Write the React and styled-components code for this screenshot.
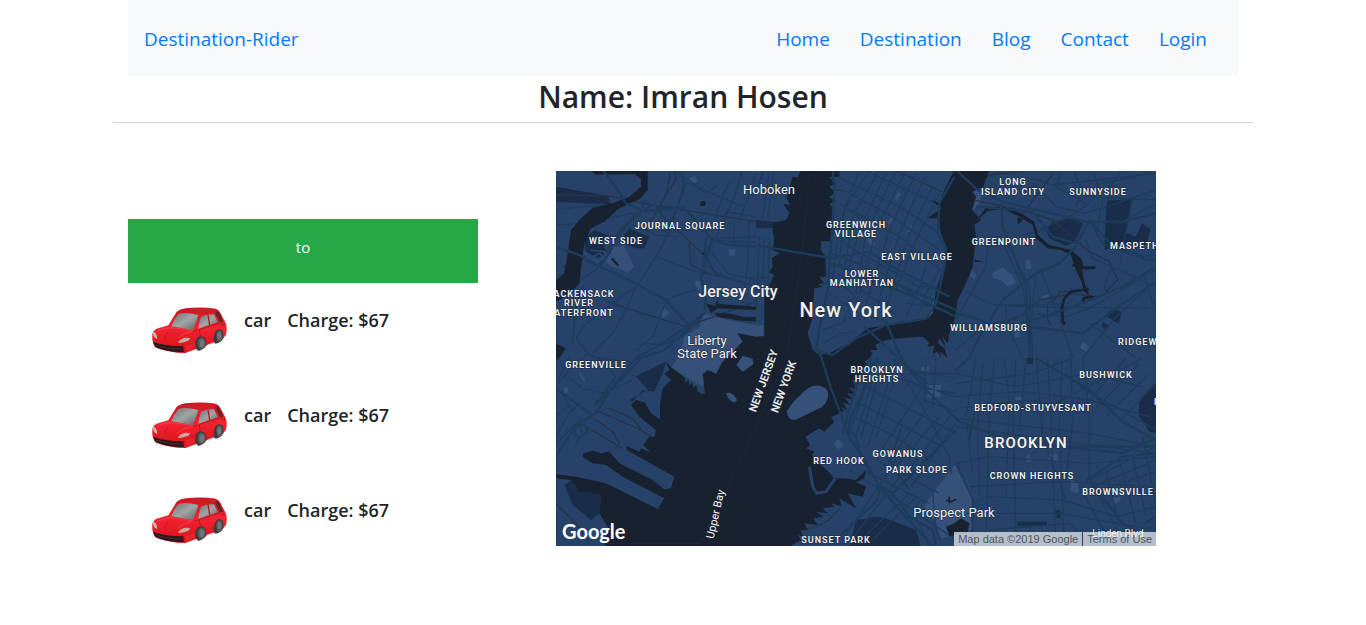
import React from "react";
import styled, { createGlobalStyle } from "styled-components";

const GlobalStyle = createGlobalStyle`
  *, *::before, *::after { box-sizing: border-box; }
  body {
    margin: 0;
    background: #fff;
    color: #212529;
    font-family: "Open Sans", "Noto Sans", sans-serif;
    font-size: 16px;
    line-height: 24px;
  }
`;

const Page = styled.div`
  width: 100%;
  max-width: 1140px;
  margin: 0 auto;
`;

const Navbar = styled.header`
  display: flex;
  align-items: center;
  justify-content: space-between;
  margin: 0 15px;
  padding: 25px 16px 23px;
  min-height: 76px;
  background: #f8f9fa;
`;

const NavLinks = styled.nav`
  display: flex;
  gap: 30px;
  padding-right: 15px;
`;

const NavLink = styled.a`
  color: #007bff;
  font-size: 19px;
  line-height: 28px;
  text-decoration: none;
`;

const Title = styled.h1`
  margin: 0;
  padding: 2px 0 6px;
  border-bottom: 1px solid #d2d2d2;
  font-size: 30px;
  font-weight: 600;
  line-height: 38px;
  text-align: center;
`;

const Content = styled.main`
  display: flex;
  align-items: flex-start;
  padding: 48px 15px;
  gap: 78px;
`;

const Rides = styled.section`
  flex: 0 0 350px;
  padding-top: 48px;
`;

const Route = styled.p`
  margin: 0;
  padding: 16px 16px 24px;
  background: #28a745;
  color: #fff;
  font-size: 15px;
  text-align: center;
`;

const RideList = styled.ul`
  margin: 0;
  padding: 0;
  list-style: none;
`;

const Ride = styled.li`
  display: flex;
  align-items: flex-start;
  gap: 16px;
  height: 95px;
  padding: 22px 20px;
`;

const RideText = styled.span`
  padding-top: 3px;
  font-size: 18px;
  font-weight: 600;
`;

const CarSvg = styled.svg`
  display: block;
  width: 80px;
  height: 50px;
`;

const MapFrame = styled.section`
  position: relative;
  flex: 0 1 600px;
`;

const MapSvg = styled.svg`
  display: block;
  width: 100%;
  height: auto;
  font-family: Roboto, sans-serif;
`;

const Attribution = styled.div`
  position: absolute;
  right: 0;
  bottom: 0;
  display: flex;
  height: 14px;
  color: #4c5561;
  font-family: "Liberation Sans", sans-serif;
  font-size: 11px;
  line-height: 14px;
  white-space: nowrap;
`;

const Credit = styled.span`
  padding: 0 4px;
  background: rgba(245, 245, 245, 0.7);
  & + & { margin-left: 1px; }
  a { color: inherit; text-decoration: none; }
`;

const AreaLabel = styled.text`
  fill: #f3f1ec;
  font-size: ${(p) => p.$size || 9}px;
  font-weight: ${(p) => p.$weight || 600};
  letter-spacing: ${(p) => (p.$tracked === false ? 0 : 1)}px;
  text-anchor: ${(p) => p.$anchor || "middle"};
  paint-order: stroke;
  stroke: #1c2a40;
  stroke-width: 1px;
`;

const LogoText = styled.text`
  fill: #fff;
  font-family: Lato, sans-serif;
  font-size: 20px;
  font-weight: 700;
`;

function Car() {
  return (
    <CarSvg viewBox="27 30 240 150" role="img" aria-label="Red car">
      <defs>
        <linearGradient id="paint" x1="0" y1="0" x2="0" y2="1">
          <stop offset="0" stopColor="#c9161e" />
          <stop offset=".45" stopColor="#f02531" />
          <stop offset="1" stopColor="#d80e19" />
        </linearGradient>
        <linearGradient id="glass" x1="0" y1="0" x2="1" y2="1">
          <stop offset="0" stopColor="#6e7072" />
          <stop offset=".5" stopColor="#a2a5a6" />
          <stop offset="1" stopColor="#606365" />
        </linearGradient>
      </defs>
      <path d="M40 116Q44 103 60 99L88 91L112 52Q119 43 140 40Q188 34 228 41Q238 43 243 52L260 84Q266 98 261 119L252 131L202 151L139 174Q90 173 51 158Q38 148 40 116Z" fill="url(#paint)" />
      <path d="M112 52Q155 38 228 41L240 47Q210 44 179 57L121 54Z" fill="#cf1d27" />
      <path d="M119 56Q144 51 178 60Q171 85 161 105Q128 99 97 94Q104 73 119 56Z" fill="url(#glass)" />
      <path d="M186 65Q205 56 225 58L236 82L178 101Q180 82 186 65Z" fill="url(#glass)" />
      <path d="M207 59L212 90" stroke="#a61a20" strokeWidth="4" />
      <path d="M228 51L238 49Q248 64 252 82L241 80Z" fill="#62272b" />
      <path d="M178 105L242 83Q252 94 258 88M175 105L164 110M181 105L184 123" fill="none" stroke="#a40d15" strokeWidth="2" />
      <path d="M55 110Q80 94 113 100Q145 102 161 109Q133 114 115 130" fill="none" stroke="#f53c45" strokeWidth="3" />
      <path d="M87 111Q76 122 78 134" fill="none" stroke="#ba101a" strokeWidth="2" />
      <path d="M41 112Q48 108 53 121L55 132Q43 129 41 112Z" fill="#c9b8af" />
      <path d="M118 140Q132 124 154 130Q147 143 118 144Z" fill="#cbaaa2" />
      <path d="M43 140Q72 153 133 154L134 171Q80 171 49 155Z" fill="#24191b" />
      <path d="M51 151Q91 164 130 162" fill="none" stroke="#5d3538" strokeWidth="2" />
      <path d="M139 151L167 145L167 160L141 172Z" fill="#e4232d" />
      <path d="M170 160Q164 128 184 124Q204 124 202 151Q196 164 178 168Z" fill="#3d3e40" />
      <ellipse cx="188" cy="145" rx="11" ry="17" fill="#5d5f61" />
      <ellipse cx="189" cy="145" rx="6" ry="11" fill="#747678" />
      <path d="M224 142Q221 108 240 102Q257 103 252 131Q246 143 230 146Z" fill="#3b3c3e" />
      <ellipse cx="241" cy="123" rx="9" ry="17" fill="#5b5d5f" />
      <ellipse cx="241" cy="122" rx="5" ry="10" fill="#737577" />
    </CarSvg>
  );
}

const parks = [
  "M165 230L205 228L215 250L235 290L215 308L195 297L165 290L150 275Z",
  "M440 425L475 440L540 455L600 465L622 465V500L600 500L545 490L560 515L500 575L480 612L462 600L440 650L390 622L345 592L370 560L385 500L430 470Z",
  "M400 25L418 18L425 35L410 42ZM518 238H537V257H518ZM325 415L343 430L320 445L313 435ZM415 335L432 330L438 370L420 350Z",
  "M1025 66L1036 70L1023 92L1016 86ZM1005 140L1014 145L1000 164L993 158ZM1065 165L1073 168L1060 188L1053 185ZM930 202L952 210L958 224L942 225Z",
  "M1308 310L1340 292L1368 315L1380 340L1355 350L1335 330L1310 325ZM1408 270L1422 268L1426 296L1410 298ZM1458 378L1478 372L1480 387L1462 390ZM1246 302L1262 313L1255 330L1242 320Z",
  "M1256 20L1280 30L1270 60L1280 70L1265 110L1248 123L1248 80Z",
  "M1580 515L1600 530L1590 545L1573 532ZM1376 482H1390V501H1376Z",
  "M1120 645H1154V682H1114ZM1095 590H1120V603H1095ZM845 807L864 823L849 838L833 824Z",
  "M1200 879L1240 950L1253 980L1245 1040L1250 1080L1190 1095L1155 1105L1140 1060L1105 1010L1130 970Z",
  "M1376 680H1400V696H1380ZM1405 866L1418 852L1430 873L1415 877ZM1478 852H1505V872H1478ZM1545 930L1570 937L1565 970L1545 964ZM1670 985L1695 980L1690 995L1670 1004Z",
  "M70 605L90 632L84 635L68 611ZM22 656L34 650L38 666L27 670Z",
  "M1165 290L1175 260L1165 330L1150 400L1125 440L1110 445L1135 390Z",
];

const darkAreas = [
  "M115 180L160 198L138 213L150 245L130 265L90 245L82 210Z",
  "M220 175L280 200L265 235L238 235L190 215Z",
  "M600 150L678 158L678 174L600 175ZM0 50L155 77L165 103L0 96Z",
  "M1490 155L1540 143L1582 160L1555 215L1530 227L1480 205L1470 180Z",
  "M1655 92L1726 87L1713 165L1700 225L1645 240L1650 115Z",
  "M1705 186L1740 200L1758 160L1784 178L1770 225L1730 238L1700 220Z",
  "M1657 425L1675 415L1697 426L1689 462L1653 440ZM1640 455L1660 468L1650 480L1637 470Z",
  "M1790 645L1803 640V790L1780 785L1765 760L1748 738L1750 690Z",
  "M220 690L275 660L240 618L330 575L320 610L295 665L260 660L230 695Z",
  "M45 930L70 965L135 975L130 1030L105 1050L50 1005L25 945Z",
  "M900 1050L960 1040L990 1045L1080 1080L1095 1130H880Z",
  "M1385 1055H1473V1067H1385ZM1498 1020H1513V1045H1503ZM1412 564H1432V581H1412Z",
];

const water = [
  "M100 0H275V60L250 88L190 115L145 155L105 175L85 220L76 290L70 340L45 370L0 395V330L25 310L36 245L45 180L75 145L110 113L170 100L220 80L255 50V27L235 12L120 14Z",
  "M0 520L28 535L15 558L0 574Z",
  "M735 0L725 22L710 20L700 55L685 53L698 68L690 83L703 105L682 101L700 130L690 150L650 158V182L655 205L650 240L672 250L648 263L650 290L638 307L655 315L640 345L650 372L625 378V498L600 500L545 490L560 515L500 575L480 612L455 600L440 612L445 655L447 670L437 672L425 664L420 645L413 655L407 637L400 647L397 630L388 638L385 622L345 592L330 575L340 600L325 612L345 630L320 655L312 700L312 748L300 740L285 730L265 697L240 690L225 705L250 740L300 780L295 800L280 800L262 825L285 848L255 835L250 845L212 828V840L355 920L345 955L325 958L290 930L230 900L190 880L160 845L135 850L110 842L82 850L80 860L110 880L150 885L200 920L325 985L305 1018L240 985L150 940L60 920L0 912V925L45 930L70 965L135 975L130 1030L155 1070L145 1130H700L735 1110L725 1095L742 1100L732 1080L755 1080L745 1060L785 1065L772 1045L802 1040L780 1025L815 1030L800 1015L835 1010L825 1000L857 1008L850 985L900 1015L875 970L920 980L930 950L900 937L925 925L930 900L900 930L865 925L835 925L815 902L795 885L768 855L775 845L750 835L762 825L748 800L790 775L805 785L835 755L825 742L850 730L865 722L853 710L875 720L860 698L883 705L865 682L892 690L872 668L900 674L878 650L905 660L888 630L920 638L900 615L935 622L910 590L948 600L925 575L940 564L950 550L942 540L965 540L958 525L990 510L1030 505L1100 500L1120 518L1113 530L1135 527L1130 552L1145 545L1155 567L1152 545L1174 563L1165 535L1145 520L1150 505L1168 530L1160 500L1175 520L1180 490L1195 450L1205 390L1225 350L1250 290L1260 200L1255 165L1275 150L1248 120L1260 80L1250 65L1282 50L1300 0H1195L1165 60L1150 100L1125 90L1155 115L1115 145L1150 145L1152 180L1170 230L1165 290L1140 360L1130 430L1115 445L1080 455L1000 465L935 475L880 520L820 550L790 555L770 540L755 490L770 440L775 355L800 350L785 343L805 340L790 320H810L808 260L795 240V214H825L828 180L812 170L835 150L832 115L820 103L840 92L818 80L840 70L820 50L840 40L818 22L850 20V0Z",
  "M450 400L478 408L483 388L489 402L600 410V420L485 415L465 430ZM475 428L530 432L560 440L600 441V454L555 452L485 440Z",
  "M433 97Q445 88 451 100L445 108L433 108Z",
  "M1260 155L1290 112L1340 110L1395 130L1435 155L1446 195L1480 225L1545 240L1575 265L1582 288L1618 292L1578 296L1586 340L1600 376L1584 365L1577 335L1560 300L1545 255L1515 240L1475 235L1440 205L1430 165L1387 138L1340 117L1295 122Z",
  "M1384 142L1402 148L1385 165ZM1255 268L1285 277L1257 275Z",
  "M1170 1070L1195 1060L1215 1045L1240 1060L1235 1090L1180 1098Z",
];

const tracks = [
  "M0 75L160 78L260 100L600 155M345 0L330 75L270 180M355 0L360 30L325 80M400 220L405 285L465 315M300 110L325 145L450 260L480 315L520 325M155 395L260 430L390 470L600 395M20 285L40 300M0 230L110 280",
  "M1015 0L1160 66M1205 80L1395 120L1490 150L1600 245L1660 275L1685 330L1650 365M1265 480L1330 465L1390 440L1450 390L1550 370L1610 380M1540 365L1510 365L1500 385L1475 400V450L1485 465M1240 810L1255 730",
  "M1200 5L1265 30L1315 12L1400 5M1395 140L1450 65L1500 0",
  "M0 1000L60 1060L100 1115M90 770L200 835M115 720L245 775L285 800M120 750L170 785L190 820L180 835M160 715L230 745L265 790",
  "M720 1085L780 1070L820 1050L855 1010M1010 850L1035 775M1000 870L1060 960",
  "M1765 1060L1800 1040M1760 800L1780 900",
];

const minorRoads = [
  "M0 120L75 110L160 105M0 165L80 160L230 130L350 108M55 340L120 300L190 180L240 140L300 95M50 520L60 400L85 340M60 505L100 555L130 567M60 505L80 470L170 400L245 345L300 260L350 170M100 560L170 490L210 420L240 350M240 540L290 500L330 395L350 380L420 360M245 540L265 520L320 525L380 500M300 260L405 300L520 325L600 350M330 388L400 465M455 230L515 310L600 330M375 30L500 85L560 110M360 0L390 25L450 70L485 45M380 55L350 160L330 190M360 200L300 195L225 160M520 325L470 300L450 285M535 160V225M580 150L575 280L560 400M500 155L510 125L600 140M525 30L500 75L465 185M560 0L535 80L480 205M600 10L580 75L545 165M485 205L600 200M470 210L600 218",
  "M600 60L625 0M640 0L620 145M650 70L690 50M600 50L700 63M655 0L635 140M625 205L620 330M640 205L635 420M600 320L650 325M610 200L600 420",
  "M835 60L860 60L990 128L1150 240M855 25L1040 115L1150 190M850 100L1030 200L1170 315M925 0L1150 105M825 180L880 230L1090 350L1140 350M825 250L980 310L1120 410M820 370L910 430L990 455M845 335L890 370L930 450M855 315L1020 435M910 0L850 160L830 330M940 0L865 120L850 290M970 0L890 140L860 335M995 0L910 180L880 290M1020 0L930 190L900 370M1050 0L960 180L910 370M1080 10L1000 180L925 420M1105 25L1030 190L955 440M1130 50L1060 190L980 450M1150 70L1080 210L1020 360M875 115L910 145L930 200M820 440L900 380M800 480L860 460L870 440M805 520L850 490L900 485M1110 290L1080 380L1050 440M1145 310L1110 370L1090 430M1050 400L1130 410",
  "M1200 450L1250 360L1290 290L1295 210M1230 365L1310 405L1440 405L1540 400M1350 405V460L1400 564M1330 195L1360 260L1400 350L1430 564M1345 205L1385 280L1420 350L1430 564M1440 310L1430 400L1420 564M1455 300L1500 420L1550 560M1200 540L1280 470L1420 430L1530 440L1600 415L1800 300M1310 405L1420 410L1780 415M1600 460L1740 564M1770 360L1680 440L1580 564M1765 320L1800 430M1590 210L1610 265L1690 300L1800 350M1670 285L1645 350L1650 370M1690 295L1705 210L1730 90M1600 150L1640 220L1740 260L1800 255M1600 160L1700 155L1800 100M1450 180L1560 130L1670 40L1700 0M1430 40L1500 110L1590 130L1800 60M1520 0L1500 50L1590 100M1550 0L1580 60L1560 110M1610 0L1640 90L1620 200M1590 80L1800 90M1640 40L1740 20L1790 0M1470 180L1400 195M1430 25L1490 45L1800 10",
  "M0 650L40 600L80 564M40 564L0 640M130 564L180 620L120 700M125 564L220 575M35 620L80 655L145 670L230 630M0 820L80 740M0 800L40 730L70 700M70 765L80 790L55 830M20 670L45 720M0 735L45 705",
  "M880 790L940 620L945 564M900 800L965 570M915 800L980 580M935 830L1020 564M960 805L1035 564M980 835L1100 650M1000 870L1120 710M1020 890L1150 740M1045 920L1180 740M1065 950L1200 760M890 740L1000 790L1140 880M910 700L1160 830M930 650L1200 790M985 610L1195 680M1000 590L1200 625M1010 564L1120 745L1180 860L1185 910M1105 700L1110 564M1130 720L1140 564M1060 610L1200 610M1080 650L1200 670M1100 690L1200 725M880 900L1040 1000L1200 1110M920 900L1120 1000M960 870L1150 970M860 1110L1020 870M885 1110L1040 910M915 1110L1060 970M950 1110L1080 980M1130 970L1140 1080L1160 1130M1080 1040L1120 1130",
  "M1200 610L1380 650L1600 610L1760 650M1200 640L1430 610L1550 564M1200 680L1400 665L1600 690L1780 740M1200 715L1420 690L1600 730M1200 745L1600 790L1800 830M1200 770L1450 805L1800 850M1260 564L1230 740L1250 910M1280 580L1265 760L1270 980M1315 564L1300 740L1290 1120M1345 564L1360 700L1350 980M1380 564L1370 720L1380 1100M1410 564L1390 780M1440 564L1460 800L1530 990M1475 564L1485 760L1500 1128M1520 564L1510 760L1525 1130M1545 564L1550 750L1530 930M1580 564L1600 730L1600 930M1480 710L1760 564M1570 650L1800 780M1600 690L1710 564M1620 715L1750 580M1650 740L1780 610M1690 755L1800 640M1600 930L1800 830M1610 950L1800 870M1600 970L1800 905M1560 930L1670 1130M1600 925L1710 1130M1650 900L1690 1070M1690 870L1740 1060M1730 860L1770 1040M1770 840L1800 1020M1250 1000L1300 980L1520 990L1680 1040L1800 1010M1230 1030L1510 1030L1800 1080M1300 1080L1540 1060L1610 1128M1200 880L1300 860L1600 880L1800 860M1240 950L1520 935L1800 950",
];

const majorRoads = [
  "M0 230L70 255L130 290L210 325L325 388L400 465M140 0L185 60L210 100L265 125L380 112L410 140L465 205L515 225L600 230M375 0L385 50L360 125L325 185M600 225L710 245L830 265M130 290L160 250L185 200L240 130M470 205L435 320L450 390L445 430L400 465L320 520L240 564L170 650L120 730L60 765L0 860M450 200L440 320M440 440L325 540L255 564L180 645L115 705M0 655L60 700L110 735M60 765H85L95 785L70 805L55 790Z",
  "M830 0L835 60L828 180L815 360L795 450L780 540L830 555L900 505L990 465L1110 445L1140 400L1165 295L1170 235L1145 190L1150 100L1195 20M825 265L940 245L1000 285L1180 380M820 280L1040 350L1200 420M910 320L1050 370L1200 440M780 530L795 560L820 640L875 790L970 950L1040 1030L1130 1130M925 470L1065 600L1115 640M990 455L1035 564L1110 660L1200 745",
  "M1200 0L1265 60L1340 95L1590 155L1700 155L1800 130M1335 95L1340 170L1410 350L1420 564M1600 150L1555 235L1510 280L1440 310L1340 390L1270 500L1240 564L1200 600M1260 110L1430 125L1490 200L1560 220M1200 430L1275 450L1300 470M1600 150L1670 230L1740 250L1770 270L1800 268M1395 460L1540 415L1700 350L1800 290M1420 470L1580 490L1680 415L1800 335",
  "M875 790L885 740L920 670L935 605L965 564M860 790L900 650L945 564M880 780L900 800L910 840L970 950L965 990L820 1128M965 945L1010 970L1060 1040L1130 1080L1140 1128M1010 970L1200 780M1200 750L1340 805L1520 830L1800 830M1440 820L1700 850L1800 805M1440 564L1600 660L1700 755L1800 810M1200 880L1250 985L1250 1128M1590 930L1700 860L1800 850M1600 930L1700 1060L1800 1120",
];

const localLabels = [
  [124, 58, "JOURNAL SQUARE"], [60, 73, "WEST SIDE"],
  [28, 126, "ACKENSACK"], [23, 135, "RIVER"], [28, 145, "ATERFRONT"],
  [40, 197, "GREENVILLE"], [300, 57, "GREENWICH"], [300, 66, "VILLAGE"],
  [361, 89, "EAST VILLAGE"], [306, 106, "LOWER"], [306, 115, "MANHATTAN"],
  [457, 14, "LONG"], [457, 24, "ISLAND CITY"], [542, 24, "SUNNYSIDE"],
  [448, 74, "GREENPOINT"], [433, 160, "WILLIAMSBURG"],
  [321, 202, "BROOKLYN"], [321, 211, "HEIGHTS"], [550, 207, "BUSHWICK"],
  [477, 240, "BEDFORD-STUYVESANT"], [476, 308, "CROWN HEIGHTS"],
  [283, 293, "RED HOOK"], [342, 286, "GOWANUS"], [361, 302, "PARK SLOPE"],
  [280, 372, "SUNSET PARK"], [562, 324, "BROWNSVILLE"],
];

function CityMap() {
  return (
    <MapFrame aria-label="Map of New York">
      <MapSvg viewBox="0 0 600 375" role="img" aria-label="New York and Jersey City">
        <rect width="600" height="375" fill="#264269" />
        <g transform="translate(0 -1) scale(.333333)" strokeLinejoin="round">
          <path d={parks.join("")} fill="#355179" />
          <path d={darkAreas.join("")} fill="#1a2d48" />
          <path d={tracks.join("")} fill="none" stroke="#25334d" strokeWidth="4" />
          <path d={minorRoads.join("")} fill="none" stroke="#1c3c5b" strokeWidth="4" />
          <path d={water.join("")} fill="#18212f" />
          <path d="M692 724Q715 686 758 653Q790 637 814 660Q823 690 798 711L722 748Q697 756 692 724Z" fill="#355179" />
          <path d="M510 670Q530 662 543 691L535 698Q515 690 510 670ZM541 585L560 557L590 566L592 583L560 605Z" fill="#355179" />
          <path d="M105 240L145 245L150 260L125 275L105 267L85 250M110 260L130 250L148 267" fill="none" stroke="#2b4b72" strokeWidth="4" />
          <path d="M760 890L770 950L782 970L810 965L838 925" fill="none" stroke="#264269" strokeWidth="9" />
          <path d="M1598 357L1545 365L1525 385L1518 410L1520 455L1527 464M1550 285L1590 295L1618 292M1582 402L1583 385L1600 380L1620 385" fill="none" stroke="#18212f" strokeWidth="8" />
          <path d="M167 265L187 287M438 250L450 255" stroke="#18212f" strokeWidth="7" />
          <path d={majorRoads.join("")} fill="none" stroke="#1b3c5a" strokeWidth="7" />
          <circle cx="270" cy="104" r="11" fill="none" stroke="#1b3c5a" strokeWidth="5" />
          <path d="M760 0Q745 250 690 564L600 770L435 1120H145" fill="none" stroke="#25323d" strokeWidth="2" strokeDasharray="7 5" />
          <path d="M1170 990L1185 995L1200 988M1180 980V1000" fill="none" stroke="#18212f" strokeWidth="5" />
        </g>
        {localLabels.map(([x, y, text]) => (
          <AreaLabel key={text} x={x} y={y}>{text}</AreaLabel>
        ))}
        <AreaLabel x="554" y="78" $anchor="start">MASPETH</AreaLabel>
        <AreaLabel x="562" y="174" $anchor="start">RIDGEWOOD</AreaLabel>
        <AreaLabel x="598" y="234" $anchor="start">E</AreaLabel>
        <AreaLabel x="213" y="23" $size={13} $weight={400} $tracked={false}>Hoboken</AreaLabel>
        <AreaLabel x="182" y="126" $size={16} $weight={500} $tracked={false}>Jersey City</AreaLabel>
        <AreaLabel x="290" y="146" $size={20} $weight={500}>New York</AreaLabel>
        <AreaLabel x="151" y="174" $size={13} $weight={400} $tracked={false}>Liberty</AreaLabel>
        <AreaLabel x="151" y="187" $size={13} $weight={400} $tracked={false}>State Park</AreaLabel>
        <AreaLabel x="398" y="346" $size={13} $weight={400} $tracked={false}>Prospect Park</AreaLabel>
        <AreaLabel x="470" y="277" $size={15}>BROOKLYN</AreaLabel>
        <AreaLabel x="562" y="366" $size={10} $weight={400} $tracked={false}>Linden Blvd</AreaLabel>
        <AreaLabel transform="translate(211 211) rotate(-70)" $size={11} $tracked={false}>NEW JERSEY</AreaLabel>
        <AreaLabel transform="translate(231 217) rotate(-70)" $size={11} $tracked={false}>NEW YORK</AreaLabel>
        <AreaLabel transform="translate(163 344) rotate(-77)" $size={11} $weight={400} $tracked={false}>Upper Bay</AreaLabel>
        <LogoText x="6" y="368">Google</LogoText>
      </MapSvg>
      <Attribution>
        <Credit>Map data ©2019 Google</Credit>
        <Credit><a href="#terms">Terms of Use</a></Credit>
      </Attribution>
    </MapFrame>
  );
}

export default function App() {
  return (
    <>
      <GlobalStyle />
      <Page>
        <Navbar>
          <NavLink href="#home">Destination-Rider</NavLink>
          <NavLinks>
            {["Home", "Destination", "Blog", "Contact", "Login"].map((name) => (
              <NavLink key={name} href={`#${name.toLowerCase()}`}>{name}</NavLink>
            ))}
          </NavLinks>
        </Navbar>
        <Title>Name: Imran Hosen</Title>
        <Content>
          <Rides>
            <Route>to</Route>
            <RideList>
              {[1, 2, 3].map((id) => (
                <Ride key={id}>
                  <Car />
                  <RideText>car</RideText>
                  <RideText>Charge: $67</RideText>
                </Ride>
              ))}
            </RideList>
          </Rides>
          <CityMap />
        </Content>
      </Page>
    </>
  );
}
